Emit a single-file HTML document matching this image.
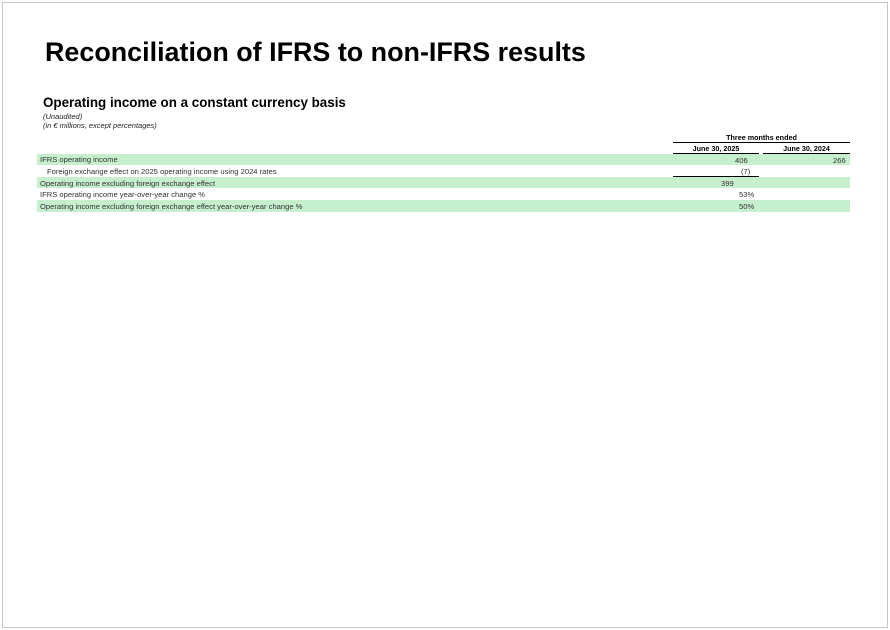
<!DOCTYPE html>
<html><head><meta charset="utf-8"><style>
body{margin:0;width:890px;height:630px;background:#fff;font-family:"Liberation Sans",Arial,sans-serif;position:relative;overflow:hidden}
.b{position:absolute;left:2px;top:2px;width:884px;height:624px;border:1px solid #c8c8c8}
.a{position:absolute;white-space:nowrap}
.g{position:absolute;left:37px;width:813px;height:11px;background:#c6efce}
.t{font-size:7.6px;color:#333;line-height:11px}
.l{position:absolute;height:1px;background:#000}
</style></head><body>
<div class="b"></div>
<div class="a" style="left:45px;top:37px;font-size:26.9px;font-weight:bold;color:#000">Reconciliation of IFRS to non-IFRS results</div>
<div class="a" style="left:43px;top:95px;font-size:13.4px;font-weight:bold;color:#000">Operating income on a constant currency basis</div>
<div class="a" style="left:43px;top:112px;font-size:7.5px;font-style:italic;color:#222">(Unaudited)</div>
<div class="a" style="left:43px;top:121px;font-size:7.5px;font-style:italic;color:#222">(in € millions, except percentages)</div>
<div class="a" style="left:673px;top:133px;width:177px;text-align:center;font-size:7.2px;font-weight:bold">Three months ended</div>
<div class="l" style="left:673px;top:142px;width:177px"></div>
<div class="a" style="left:673px;top:144px;width:86px;text-align:center;font-size:7.2px;font-weight:bold">June 30, 2025</div>
<div class="a" style="left:763px;top:144px;width:87px;text-align:center;font-size:7.2px;font-weight:bold">June 30, 2024</div>
<div class="l" style="left:673px;top:153px;width:86px"></div>
<div class="l" style="left:763px;top:153px;width:87px"></div>
<div class="g" style="top:154px"></div>
<div class="g" style="top:177px"></div>
<div class="g" style="top:200px;height:12px"></div>
<div class="a t" style="left:40px;top:154px">IFRS operating income</div>
<div class="a t" style="left:47px;top:166px">Foreign exchange effect on 2025 operating income using 2024 rates</div>
<div class="a t" style="left:40px;top:178px">Operating income excluding foreign exchange effect</div>
<div class="a t" style="left:40px;top:189px">IFRS operating income year-over-year change %</div>
<div class="a t" style="left:40px;top:201px">Operating income excluding foreign exchange effect year-over-year change %</div>
<div class="a t" style="left:735px;top:155px">406</div>
<div class="a t" style="left:833px;top:155px">266</div>
<div class="a t" style="left:741px;top:166px">(7)</div>
<div class="l" style="left:673px;top:176px;width:86px"></div>
<div class="a t" style="left:721px;top:178px">399</div>
<div class="a t" style="left:739px;top:189px">53%</div>
<div class="a t" style="left:739px;top:201px">50%</div>
</body></html>
